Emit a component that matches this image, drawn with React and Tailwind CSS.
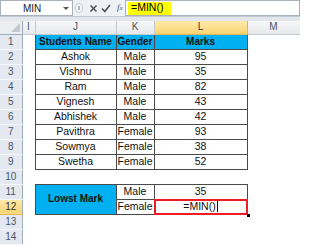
import React from "react";

const students = [
  ["Ashok", "Male", 95],
  ["Vishnu", "Male", 35],
  ["Ram", "Male", 82],
  ["Vignesh", "Male", 43],
  ["Abhishek", "Male", 42],
  ["Pavithra", "Female", 93],
  ["Sowmya", "Female", 38],
  ["Swetha", "Female", 52],
];

const cols = ["I", "J", "K", "L", "M"];

const RowHead = ({ n, active }) => (
  <td
    className={`h-[15px] p-0 text-center text-[10px] leading-none border-r border-b border-r-[#9eabbd] ${
      active
        ? "bg-gradient-to-b from-[#fde9a9] to-[#f8d371] text-[#333] border-b-[#e0b450]"
        : "bg-[#e4e9f1] text-[#4b5563] border-b-[#f4f6f9]"
    }`}
  >
    {n}
  </td>
);

const cell = "p-0 text-center text-[10.5px] leading-none text-[#111] border border-[#4a4a4a]";
const head = "p-0 text-center text-[10px] leading-none font-bold text-[#111] border border-[#4a4a4a] bg-[#00b0f0]";

export default function App() {
  return (
    <div className="w-[300px] h-[246px] overflow-hidden bg-white font-['Liberation_Sans',Arial,sans-serif]">
      {/* formula bar */}
      <div className="flex h-[17px] bg-[#eef1f5] border-b border-[#c3cad4]">
        <div className="relative w-[73px] h-[16px] bg-white border border-[#a9b1bc] flex items-center">
          <span className="ml-[22px] text-[10px] text-[#222]">MIN</span>
          <span className="absolute right-[3px] top-[6px] w-0 h-0 border-l-[3px] border-r-[3px] border-t-[3px] border-l-transparent border-r-transparent border-t-[#555]" />
        </div>
        <div className="w-[12px] flex items-center justify-center">
          <span className="w-[8px] h-[10px] rounded-full border border-[#c7cdd6] bg-[#f6f7f9] flex items-center justify-center">
            <span className="w-[2px] h-[4px] border-l border-r border-[#b0b7c1]" />
          </span>
        </div>
        <div className="flex items-center gap-[3px] pl-[4px] w-[40px]">
          <svg width="9" height="9" viewBox="0 0 9 9">
            <path d="M1.5 1.5 L7.5 7.5 M7.5 1.5 L1.5 7.5" stroke="#505560" strokeWidth="1.6" />
          </svg>
          <svg width="10" height="9" viewBox="0 0 10 9">
            <path d="M1 4.5 L3.8 7.5 L9 1" stroke="#505560" strokeWidth="1.7" fill="none" />
          </svg>
          <span className="ml-[3px] text-[9px] italic text-[#505560] font-['Liberation_Serif',serif]">f<span className="text-[7px]">x</span></span>
        </div>
        <div className="flex-1 h-[16px] bg-white border border-[#a9b1bc] flex items-center">
          <span className="ml-[2px] h-[13px] w-[43px] bg-[#ffff00] flex items-center pl-[3px] text-[10.5px] text-black">=MIN()</span>
        </div>
      </div>
      <div className="h-[4px] bg-[#e3e7ec]" />

      <table className="border-collapse table-fixed w-[300px]">
        <colgroup>
          <col className="w-[22px]" />
          <col className="w-[13px]" />
          <col className="w-[81px]" />
          <col className="w-[38px]" />
          <col className="w-[93px]" />
          <col className="w-[53px]" />
        </colgroup>
        <tbody>
          <tr>
            <td className="relative h-[13px] p-0 bg-[#eceef1] border-r border-b border-[#9eabbd]">
              <svg className="absolute right-[2px] bottom-[2px]" width="9" height="9" viewBox="0 0 9 9">
                <path d="M9 0 L9 9 L0 9 Z" fill="#c4c9d0" />
              </svg>
            </td>
            {cols.map((c) => (
              <td
                key={c}
                className={`h-[13px] p-0 text-center text-[10px] leading-none border-r border-b ${
                  c === "L"
                    ? "bg-gradient-to-b from-[#fdeaa8] to-[#f9d372] text-[#333] border-[#e2b656]"
                    : "bg-gradient-to-b from-[#f7f8f9] to-[#e6e8eb] text-[#4b5563] border-[#c5cad1]"
                }`}
              >
                {c}
              </td>
            ))}
          </tr>
          <tr>
            <RowHead n={1} />
            <td className="p-0" />
            <td className={head}>Students Name</td>
            <td className={head}>Gender</td>
            <td className={head}>Marks</td>
            <td className="p-0" />
          </tr>
          {students.map(([name, g, m], i) => (
            <tr key={name}>
              <RowHead n={i + 2} />
              <td className="p-0" />
              <td className={cell}>{name}</td>
              <td className={cell}>{g}</td>
              <td className={cell}>{m}</td>
              <td className="p-0" />
            </tr>
          ))}
          <tr>
            <RowHead n={10} />
            <td className="p-0" colSpan={5} />
          </tr>
          <tr>
            <RowHead n={11} />
            <td className="p-0" />
            <td rowSpan={2} className={head}>Lowst Mark</td>
            <td className={cell}>Male</td>
            <td className={cell}>35</td>
            <td className="p-0" />
          </tr>
          <tr>
            <RowHead n={12} active />
            <td className="p-0" />
            <td className={cell}>Female</td>
            <td className={`${cell} relative`}>
              <span>=MIN()</span>
              <span className="inline-block align-middle w-px h-[11px] bg-black ml-px" />
              <span className="absolute -inset-[1px] border-2 border-[#ee1c24]" />
              <span className="absolute -right-[3px] -bottom-[3px] w-[3px] h-[3px] bg-black" />
            </td>
            <td className="p-0" />
          </tr>
          <tr>
            <RowHead n={13} />
            <td className="p-0" colSpan={5} />
          </tr>
          <tr>
            <RowHead n={14} />
            <td className="p-0" colSpan={5} />
          </tr>
        </tbody>
      </table>
    </div>
  );
}
